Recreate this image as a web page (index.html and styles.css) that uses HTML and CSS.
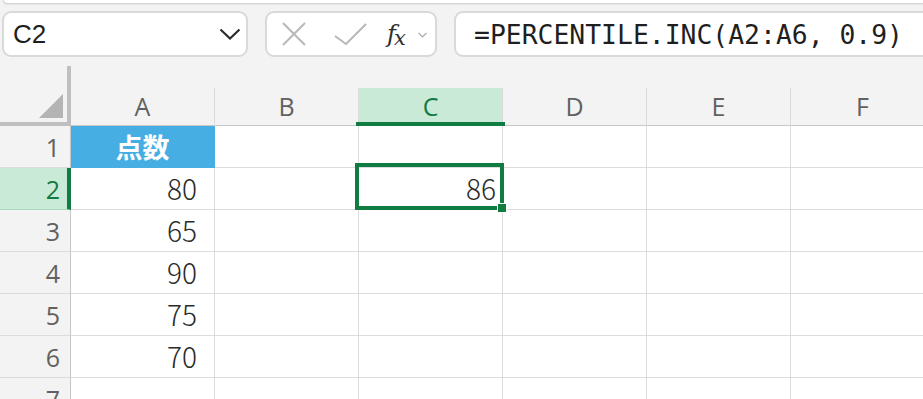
FILE: index.html
```html
<!DOCTYPE html>
<html lang="ja">

<head>
    <meta charset="UTF-8">
    <meta name="viewport" content="width=device-width, initial-scale=1.0">
    <title>PERCENTILE.INC</title>
    <link rel="stylesheet" href="styles.css">
</head>

<body>
    <div class="ribbon"></div>

    <!-- 数式バー -->
    <div class="toolbar">
        <div class="name-box">
            <span class="name">C2</span>
            <svg class="chevron" width="22" height="12" viewBox="0 0 22 12">
                <polyline points="1.5,1.5 11,10.5 20.5,1.5" fill="none" stroke="#2b2b2b" stroke-width="2.2" />
            </svg>
        </div>
        <div class="btn-box">
            <svg class="icon-x" width="24" height="24" viewBox="0 0 24 24">
                <path d="M1 1 L23 23 M23 1 L1 23" stroke="#b8b8b8" stroke-width="2" fill="none" />
            </svg>
            <svg class="icon-check" width="33" height="22" viewBox="0 0 33 22">
                <polyline points="1,13 12,21 32,1" fill="none" stroke="#b8b8b8" stroke-width="2" />
            </svg>
            <span class="fx"><i>f</i><i class="x">x</i></span>
            <svg class="small-chevron" width="9" height="6" viewBox="0 0 9 6">
                <polyline points="0.5,0.8 4.5,4.8 8.5,0.8" fill="none" stroke="#a8a8a8" stroke-width="1.2" />
            </svg>
        </div>
        <div class="formula">=PERCENTILE.INC(A2:A6, 0.9)</div>
    </div>

    <!-- シート -->
    <div class="sheet">
        <div class="corner"><span class="tri"></span></div>
        <div class="col-head">A</div>
        <div class="col-head">B</div>
        <div class="col-head sel">C</div>
        <div class="col-head">D</div>
        <div class="col-head">E</div>
        <div class="col-head">F</div>

        <div class="row-head">1</div>
        <div class="cell title">点数</div>
        <div class="cell"></div>
        <div class="cell"></div>
        <div class="cell"></div>
        <div class="cell"></div>
        <div class="cell"></div>

        <div class="row-head sel">2</div>
        <div class="cell num">80</div>
        <div class="cell"></div>
        <div class="cell num active">86<span class="handle"></span></div>
        <div class="cell"></div>
        <div class="cell"></div>
        <div class="cell"></div>

        <div class="row-head">3</div>
        <div class="cell num">65</div>
        <div class="cell"></div>
        <div class="cell"></div>
        <div class="cell"></div>
        <div class="cell"></div>
        <div class="cell"></div>

        <div class="row-head">4</div>
        <div class="cell num">90</div>
        <div class="cell"></div>
        <div class="cell"></div>
        <div class="cell"></div>
        <div class="cell"></div>
        <div class="cell"></div>

        <div class="row-head">5</div>
        <div class="cell num">75</div>
        <div class="cell"></div>
        <div class="cell"></div>
        <div class="cell"></div>
        <div class="cell"></div>
        <div class="cell"></div>

        <div class="row-head">6</div>
        <div class="cell num">70</div>
        <div class="cell"></div>
        <div class="cell"></div>
        <div class="cell"></div>
        <div class="cell"></div>
        <div class="cell"></div>

        <div class="row-head">7</div>
        <div class="cell"></div>
        <div class="cell"></div>
        <div class="cell"></div>
        <div class="cell"></div>
        <div class="cell"></div>
        <div class="cell"></div>
    </div>
</body>

</html>
```

FILE: styles.css
```css
body {
    margin: 0;
    padding: 0;
    width: 923px;
    height: 399px;
    overflow: hidden;
    background-color: #f3f3f3;
    font-family: "Open Sans", "Noto Sans", sans-serif;
}

.ribbon {
    height: 3px;
    margin-left: 3px;
    background-color: #fff;
    border-left: 1px solid #d4d4d4;
    border-bottom: 1px solid #d4d4d4;
    border-bottom-left-radius: 7px;
    box-shadow: 0 1px 2px rgba(0, 0, 0, 0.06);
}

/* 数式バー */
.toolbar {
    display: flex;
    gap: 17px;
    height: 46px;
    margin-top: 7px;
    padding-left: 2px;
}

.toolbar > div {
    box-sizing: border-box;
    height: 46px;
    background-color: #fff;
    border: 2px solid #d9d9d9;
    border-radius: 9px;
    display: flex;
    align-items: center;
    flex: none;
}

.name-box {
    width: 246px;
    padding: 0 5px 0 9px;
    justify-content: space-between;
}

.name-box .name {
    font-family: "Liberation Sans", Arial, sans-serif;
    font-size: 26px;
    color: #1e1e1e;
}

.btn-box {
    width: 172px;
    padding-left: 15px;
}

.btn-box .icon-check {
    margin-left: 28px;
}

.btn-box .fx {
    margin-left: 20px;
    font-family: "DejaVu Serif", serif;
    font-size: 24px;
    color: #2f2f2f;
    line-height: 1;
    letter-spacing: -2px;
}

.btn-box .fx .x {
    font-size: 21px;
    position: relative;
    top: 3px;
}

.btn-box .small-chevron {
    margin-left: 14px;
    margin-top: 2px;
}

.formula {
    width: 520px;
    padding-left: 18px;
    font-family: "DejaVu Sans Mono", monospace;
    font-size: 26.4px;
    color: #1f1f1f;
}

/* シート */
.sheet {
    display: grid;
    grid-template-columns: 71px repeat(6, 144px);
    grid-template-rows: 69px;
    grid-auto-rows: 42px;
}

.corner {
    box-sizing: border-box;
    margin-top: 9px;
    border-right: 4px solid #bfbfbf;
    border-bottom: 4px solid #bfbfbf;
    display: flex;
    justify-content: flex-end;
    align-items: flex-end;
    padding: 0 4px 4px 0;
}

.corner .tri {
    width: 24px;
    height: 24px;
    background-color: #b4b4b4;
    clip-path: polygon(100% 0, 100% 100%, 0 100%);
}

.col-head {
    box-sizing: border-box;
    align-self: end;
    height: 38px;
    border-right: 1px solid #dcdcdc;
    border-bottom: 1px solid #c8c8c8;
    text-align: center;
    line-height: 37px;
    font-size: 25px;
    color: #616161;
}

.col-head.sel {
    position: relative;
    background-color: #caead8;
    color: #107c41;
    border-bottom-color: #107c41;
}

.col-head.sel::after {
    content: "";
    position: absolute;
    left: -3px;
    right: -3px;
    bottom: -1px;
    height: 4px;
    background-color: #107c41;
}

.row-head {
    box-sizing: border-box;
    border-right: 1px solid #c6c6c6;
    border-bottom: 1px solid #dcdcdc;
    text-align: right;
    padding-right: 10px;
    line-height: 42px;
    font-size: 25px;
    color: #616161;
}

.row-head.sel {
    background-color: #caead8;
    color: #107c41;
    border-right: 4px solid #107c41;
    border-bottom-color: #a9d9bc;
    padding-right: 7px;
}

.cell {
    box-sizing: border-box;
    background-color: #fff;
    border-right: 1px solid #dcdcdc;
    border-bottom: 1px solid #dcdcdc;
    line-height: 41px;
    font-family: "Noto Sans CJK JP", sans-serif;
    font-weight: 300;
    font-size: 28px;
    color: #2a2a2a;
}

.cell.title {
    background-color: #46aee2;
    border-color: #46aee2;
    color: #fff;
    font-weight: 700;
    font-size: 27px;
    text-align: center;
}

.cell.num {
    text-align: right;
    padding-right: 17px;
}

.cell.active {
    position: relative;
    padding-right: 6px;
}

.cell.active::before {
    content: "";
    position: absolute;
    left: -4px;
    top: -5px;
    right: -2px;
    bottom: -1px;
    border: 4px solid #107c41;
}

.cell.active .handle {
    position: absolute;
    right: -5px;
    bottom: -4px;
    width: 8px;
    height: 8px;
    background-color: #107c41;
    border: 1px solid #fff;
}
```
